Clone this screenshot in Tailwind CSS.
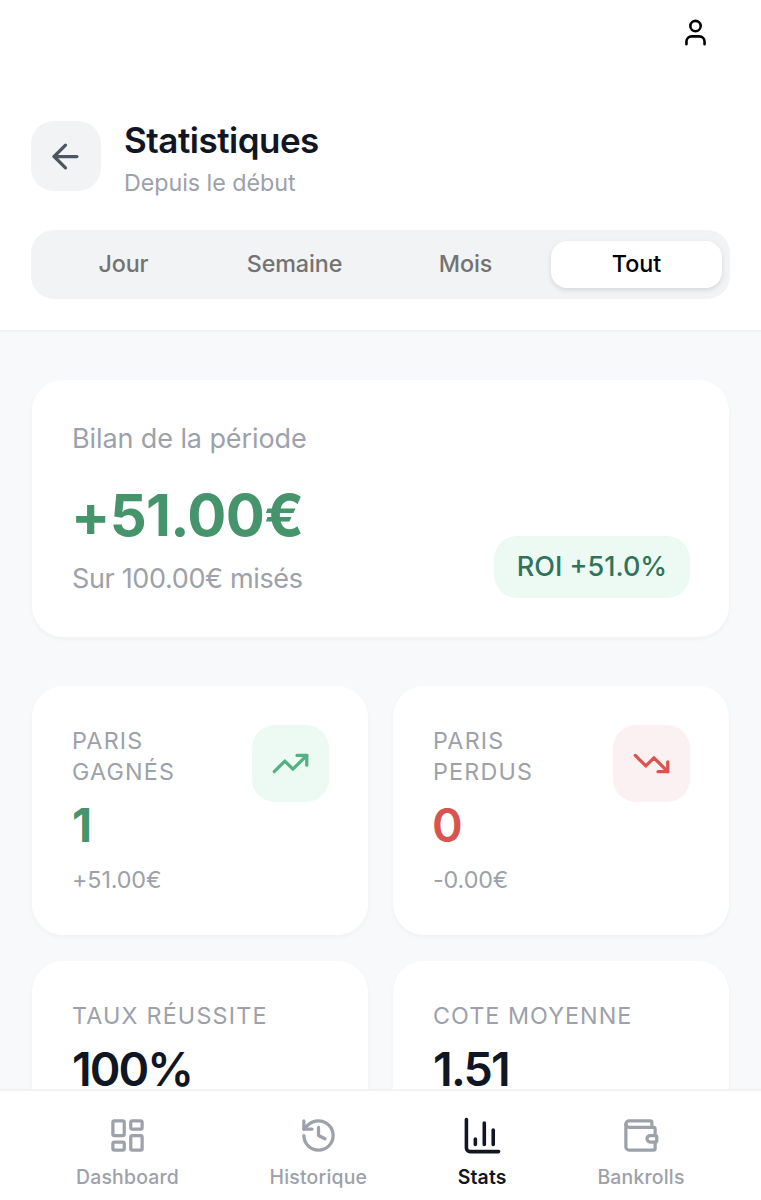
<!DOCTYPE html>
<html lang="fr">
  <head>
    <meta charset="UTF-8" />
    <meta name="viewport" content="width=device-width, initial-scale=1.0" />
    <title>Statistiques</title>
    <script src="https://cdn.jsdelivr.net/npm/@tailwindcss/browser@4"></script>
  </head>
  <body class="bg-[#f8f9fb] font-['Inter',sans-serif] text-[#101624]">
    <div class="h-[1200px] flex flex-col overflow-hidden">
      <!-- Header -->
      <header class="shrink-0 h-[332px] bg-white border-b-2 border-[#f1f2f4] px-[31px]">
        <div class="h-[121px] flex justify-end pt-[17px] pr-[19.5px]">
          <svg class="size-[31px]" viewBox="0 0 24 24" fill="none" stroke="#000" stroke-width="2" stroke-linecap="round" stroke-linejoin="round">
            <path d="M19 21v-2a4 4 0 0 0-4-4H9a4 4 0 0 0-4 4v2" />
            <circle cx="12" cy="7" r="4" />
          </svg>
        </div>

        <div class="flex h-[70px]">
          <button class="size-[70px] rounded-[23px] bg-[#f2f3f5] flex items-center justify-center pr-px">
            <svg class="size-[39px]" viewBox="0 0 24 24" fill="none" stroke="#4b5563" stroke-width="2" stroke-linecap="round" stroke-linejoin="round">
              <path d="m12 19-7-7 7-7" />
              <path d="M19 12H5" />
            </svg>
          </button>
          <div class="ml-[23px] whitespace-nowrap">
            <h1 class="text-[35px] leading-[39px] font-semibold tracking-[-0.5px]">Statistiques</h1>
            <p class="mt-[7px] text-[23.3px] leading-[31px] tracking-[-0.05px] text-[#9ca1aa]">Depuis le début</p>
          </div>
        </div>

        <div class="mt-[39px] h-[69px] w-[699px] rounded-[23px] bg-[#f2f3f5] pl-[7px] pr-[8px] flex items-center text-[23.3px] font-medium text-[#737373]">
          <button class="flex-1 h-[47px] tracking-[-0.1px]">Jour</button>
          <button class="flex-1 h-[47px] tracking-[-0.1px]">Semaine</button>
          <button class="flex-1 h-[47px] tracking-[-0.1px]">Mois</button>
          <button class="flex-1 h-[47px] rounded-[16px] bg-white text-black shadow-[0_2px_5px_rgba(0,0,0,0.12)]">Tout</button>
        </div>
      </header>

      <!-- Content -->
      <main class="flex-1 min-h-0 overflow-hidden px-8 pt-12 whitespace-nowrap">
        <section class="h-[257px] rounded-[31px] bg-white shadow-[0_2px_4px_rgba(0,0,0,0.04)] pl-10 pr-[39px] flex justify-between">
          <div class="pt-[39px]">
            <p class="text-[27px] leading-[39px] tracking-[-0.1px] text-[#9ca1aa]">Bilan de la période</p>
            <p class="-ml-px mt-[22px] text-[58px] leading-[70px] font-bold tracking-[-0.7px] text-[#45946c]">+51.00€</p>
            <p class="mt-[9px] text-[27px] leading-[39px] tracking-[-0.35px] text-[#9ca1aa]">Sur 100.00€ misés</p>
          </div>
          <div class="mt-[156px] w-[196px] h-[62px] rounded-[23px] bg-[#edfaf4] flex items-center justify-center pt-px text-[27px] font-medium text-[#31735a]">ROI +51.0%</div>
        </section>

        <div class="mt-[49px] grid grid-cols-2 gap-x-[25px] gap-y-[26px]">
          <section class="h-[249px] rounded-[31px] bg-white shadow-[0_2px_4px_rgba(0,0,0,0.04)] pl-10 pr-[39px] pt-[39px] flex justify-between">
            <div>
              <p class="text-[23.3px] leading-[31px] tracking-[1.2px] text-[#9ca1aa]">PARIS<br />GAGNÉS</p>
              <p class="mt-[11px] text-[46.6px] leading-[54px] font-bold text-[#45946c]">1</p>
              <p class="mt-[12px] text-[23.3px] leading-[31px] tracking-[-0.1px] text-[#9ca1aa]">+51.00€</p>
            </div>
            <div class="size-[77px] rounded-[23px] bg-[#edfaf4] flex items-center justify-center">
              <svg class="size-[39px]" viewBox="0 0 24 24" fill="none" stroke="#52b283" stroke-width="2" stroke-linecap="round" stroke-linejoin="round">
                <path d="M16 7h6v6" />
                <path d="m22 7-8.5 8.5-5-5L2 17" />
              </svg>
            </div>
          </section>

          <section class="h-[249px] rounded-[31px] bg-white shadow-[0_2px_4px_rgba(0,0,0,0.04)] pl-10 pr-[39px] pt-[39px] flex justify-between">
            <div>
              <p class="text-[23.3px] leading-[31px] tracking-[1.2px] text-[#9ca1aa]">PARIS<br />PERDUS</p>
              <p class="mt-[11px] text-[46.6px] leading-[54px] font-semibold text-[#d9534f] -ml-px">0</p>
              <p class="mt-[12px] text-[23.3px] leading-[31px] tracking-[-0.1px] text-[#9ca1aa]">-0.00€</p>
            </div>
            <div class="size-[77px] rounded-[23px] bg-[#fcf1f2] flex items-center justify-center">
              <svg class="size-[39px]" viewBox="0 0 24 24" fill="none" stroke="#d9534f" stroke-width="2" stroke-linecap="round" stroke-linejoin="round">
                <path d="M16 17h6v-6" />
                <path d="m22 17-8.5-8.5-5 5L2 7" />
              </svg>
            </div>
          </section>

          <section class="h-[249px] rounded-[31px] bg-white shadow-[0_2px_4px_rgba(0,0,0,0.04)] px-10 pt-[39px]">
            <p class="text-[23.3px] leading-[31px] tracking-[1.2px] text-[#9ca1aa]">TAUX RÉUSSITE</p>
            <p class="mt-[15px] text-[46.6px] leading-[46px] font-semibold tracking-[-2px]">100%</p>
          </section>

          <section class="h-[249px] rounded-[31px] bg-white shadow-[0_2px_4px_rgba(0,0,0,0.04)] px-10 pt-[39px]">
            <p class="text-[23.3px] leading-[31px] tracking-[1.05px] text-[#9ca1aa]">COTE MOYENNE</p>
            <p class="mt-[15px] text-[46.6px] leading-[46px] font-semibold tracking-[-1.8px]">1.51</p>
          </section>
        </div>
      </main>

      <!-- Bottom nav -->
      <nav class="shrink-0 h-[111px] bg-white border-t-2 border-[#f1f2f4] px-[76px] pt-[25px] flex justify-between text-[19.4px] font-medium tracking-[0.2px] text-[#9ca1aa]">
        <a class="w-[103px] flex flex-col items-center">
          <svg class="size-[39px] shrink-0" viewBox="0 0 24 24" fill="none" stroke="currentColor" stroke-width="2" stroke-linecap="round" stroke-linejoin="round">
            <rect width="7" height="9" x="3" y="3" rx="1" />
            <rect width="7" height="5" x="14" y="3" rx="1" />
            <rect width="7" height="9" x="14" y="12" rx="1" />
            <rect width="7" height="5" x="3" y="16" rx="1" />
          </svg>
          <span class="mt-[9px] leading-[26px]">Dashboard</span>
        </a>
        <a class="w-[98px] flex flex-col items-center">
          <svg class="size-[39px] shrink-0" viewBox="0 0 24 24" fill="none" stroke="currentColor" stroke-width="2" stroke-linecap="round" stroke-linejoin="round">
            <path d="M3 12a9 9 0 1 0 9-9 9.75 9.75 0 0 0-6.74 2.74L3 8" />
            <path d="M3 3v5h5" />
            <path d="M12 7v5l4 2" />
          </svg>
          <span class="mt-[9px] leading-[26px]">Historique</span>
        </a>
        <a class="w-[49px] flex flex-col items-center text-[#101624]">
          <svg class="size-[39px] shrink-0 scale-110" viewBox="0 0 24 24" fill="none" stroke="currentColor" stroke-width="2" stroke-linecap="round" stroke-linejoin="round">
            <path d="M3 3v16a2 2 0 0 0 2 2h16" />
            <path d="M18 17V9" />
            <path d="M13 17V5" />
            <path d="M8 17v-3" />
          </svg>
          <span class="mt-[9px] leading-[26px] font-semibold">Stats</span>
        </a>
        <a class="w-[88px] flex flex-col items-center">
          <svg class="size-[39px] shrink-0" viewBox="0 0 24 24" fill="none" stroke="currentColor" stroke-width="2" stroke-linecap="round" stroke-linejoin="round">
            <path d="M19 7V4a1 1 0 0 0-1-1H5a2 2 0 0 0 0 4h15a1 1 0 0 1 1 1v4h-3a2 2 0 0 0 0 4h3a1 1 0 0 0 1-1v-2a1 1 0 0 0-1-1" />
            <path d="M3 5v14a2 2 0 0 0 2 2h15a1 1 0 0 0 1-1v-4" />
          </svg>
          <span class="mt-[9px] leading-[26px]">Bankrolls</span>
        </a>
      </nav>
    </div>
  </body>
</html>
